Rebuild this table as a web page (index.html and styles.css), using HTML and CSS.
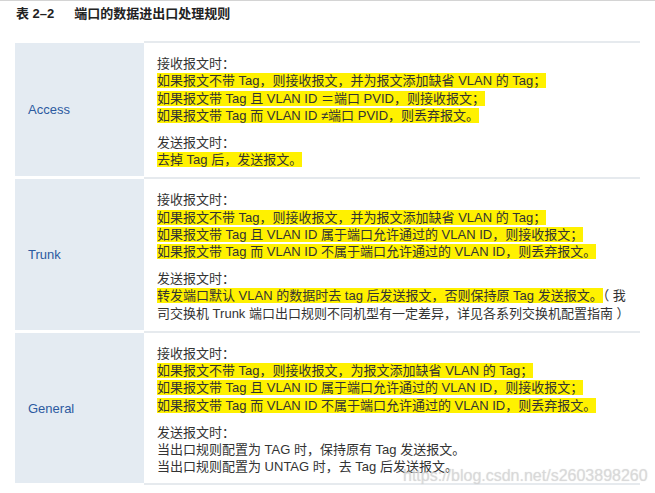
FILE: index.html
```html
<!DOCTYPE html>
<html lang="zh-CN">
<head>
<meta charset="utf-8">
<title>表 2-2 端口的数据进出口处理规则</title>
<link rel="stylesheet" href="styles.css">
</head>
<body>
<div class="caption"><span>表 2–2</span><span>端口的数据进出口处理规则</span></div>
<div class="table">
  <div class="row">
    <div class="port">Access</div>
    <div class="desc">
      <div class="block">
        <div>接收报文时：</div>
        <div><span class="hl">如果报文不带 Tag，则接收报文，并为报文添加缺省 VLAN 的 Tag；</span></div>
        <div><span class="hl">如果报文带 Tag 且 VLAN ID ＝端口 PVID，则接收报文；</span></div>
        <div><span class="hl">如果报文带 Tag 而 VLAN ID ≠端口 PVID，则丢弃报文。</span></div>
      </div>
      <div class="block">
        <div>发送报文时：</div>
        <div><span class="hl">去掉 Tag 后，发送报文。</span></div>
      </div>
    </div>
  </div>
  <div class="row">
    <div class="port">Trunk</div>
    <div class="desc">
      <div class="block">
        <div>接收报文时：</div>
        <div><span class="hl">如果报文不带 Tag，则接收报文，并为报文添加缺省 VLAN 的 Tag；</span></div>
        <div><span class="hl">如果报文带 Tag 且 VLAN ID 属于端口允许通过的 VLAN ID，则接收报文；</span></div>
        <div><span class="hl">如果报文带 Tag 而 VLAN ID 不属于端口允许通过的 VLAN ID，则丢弃报文。</span></div>
      </div>
      <div class="block">
        <div>发送报文时：</div>
        <div class="nowrap"><span class="hl">转发端口默认 VLAN 的数据时去 tag 后发送报文，否则保持原 Tag 发送报文。</span>（ 我</div>
        <div>司交换机 Trunk 端口出口规则不同机型有一定差异，详见各系列交换机配置指南 ）</div>
      </div>
    </div>
  </div>
  <div class="row">
    <div class="port">General</div>
    <div class="desc">
      <div class="block">
        <div>接收报文时：</div>
        <div><span class="hl">如果报文不带 Tag，则接收报文，为报文添加缺省 VLAN 的 Tag；</span></div>
        <div><span class="hl">如果报文带 Tag 且 VLAN ID 属于端口允许通过的 VLAN ID，则接收报文；</span></div>
        <div><span class="hl">如果报文带 Tag 而 VLAN ID 不属于端口允许通过的 VLAN ID，则丢弃报文。</span></div>
      </div>
      <div class="block">
        <div>发送报文时：</div>
        <div>当出口规则配置为 TAG 时，保持原有 Tag 发送报文。</div>
        <div>当出口规则配置为 UNTAG 时，去 Tag 后发送报文。</div>
      </div>
    </div>
  </div>
</div>
<div class="watermark">https://blog.csdn.net/s2603898260</div>
</body>
</html>
```
FILE: styles.css
```css
html, body {
  margin: 0;
  background: #fff;
}
body {
  position: relative;
  font-family: "Liberation Sans", "Noto Sans CJK SC", sans-serif;
  font-size: 13px;
  color: #333;
  border-top: 1px solid #d4d4d4;
  min-height: 492px;
}
.caption {
  display: flex;
  gap: 20px;
  padding: 4px 0 0 16px;
  line-height: 17px;
  font-weight: bold;
  color: #222;
}
.table {
  margin: 19px 15px 0 15px;
}
.row {
  display: grid;
  grid-template-columns: 129px 1fr;
}
.row + .row {
  margin-top: 1px;
}
.port {
  display: flex;
  align-items: center;
  padding-left: 13px;
  background: #e4ebf2;
  background-clip: padding-box;
  border-top: 2px solid #fff;
  color: #2c5aa0;
}
.desc {
  border-top: 2px solid #e6eaee;
  padding: 12px 4px 8px 13px;
  line-height: 17.3px;
}
.nowrap {
  white-space: nowrap;
}
.row:last-child .desc {
  border-bottom: 2px solid #e6eaee;
}
.row:last-child .port {
  border-bottom: 2px solid #fff;
}
.block + .block {
  margin-top: 9.5px;
}
.hl {
  background: #fff100;
}
.watermark {
  position: absolute;
  left: 403px;
  top: 466px;
  font-size: 16px;
  line-height: 18px;
  color: rgba(215, 215, 215, 0.75);
  text-shadow: 0 0 1px rgba(150, 150, 150, 0.35);
}
```
